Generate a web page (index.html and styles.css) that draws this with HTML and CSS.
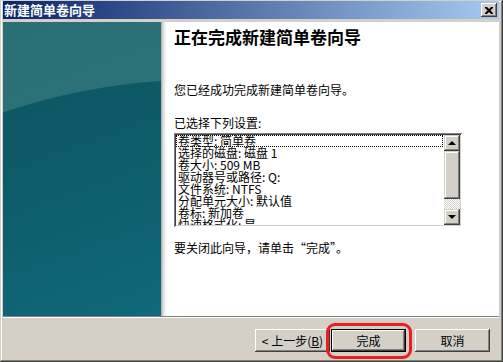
FILE: index.html
```html
<!DOCTYPE html>
<html lang="zh-CN">
<head>
    <meta charset="UTF-8">
    <title>新建简单卷向导</title>
    <link rel="stylesheet" href="styles.css">
</head>
<body>

    <div class="window">
        <div class="titlebar">
            <span class="title">新建简单卷向导</span>
            <button class="close-btn" aria-label="关闭">
                <svg width="8" height="7" viewBox="0 0 8 7">
                    <path d="M0 0h2l2 2 2-2h2v1l-2.5 2.5L8 6v1H6L4 5 2 7H0V6l2.5-2.5L0 1z" fill="#000"/>
                </svg>
            </button>
        </div>

        <div class="wizard">
            <div class="side"></div>
            <div class="main">
                <h1>正在完成新建简单卷向导</h1>
                <p class="intro">您已经成功完成新建简单卷向导。</p>
                <p class="label">已选择下列设置:</p>

                <div class="listbox">
                    <div class="items">
                        <div class="item focused">卷类型: 简单卷</div>
                        <div class="item">选择的磁盘: 磁盘 1</div>
                        <div class="item">卷大小: 509 MB</div>
                        <div class="item">驱动器号或路径: Q:</div>
                        <div class="item">文件系统: NTFS</div>
                        <div class="item">分配单元大小: 默认值</div>
                        <div class="item">卷标: 新加卷</div>
                        <div class="item">快速格式化: 是</div>
                    </div>
                    <div class="scrollbar">
                        <div class="sb-btn"><span class="arrow up"></span></div>
                        <div class="sb-thumb"></div>
                        <div class="sb-track"></div>
                        <div class="sb-btn"><span class="arrow down"></span></div>
                    </div>
                </div>

                <p class="note">要关闭此向导，请单击“完成”。</p>
            </div>
        </div>

        <div class="footer">
            <button class="btn">&lt; 上一步(<u>B</u>)</button>
            <button class="btn finish">完成<span class="mark"></span></button>
            <button class="btn cancel">取消</button>
        </div>
    </div>

</body>
</html>
```

FILE: styles.css
```css
body {
    margin: 0;
    font-family: "Noto Sans CJK SC", "Liberation Sans", sans-serif;
    font-size: 12px;
    color: #000;
}
.window {
    width: 503px;
    height: 362px;
    box-sizing: border-box;
    padding: 1px 4px 2px 3px;
    background: #d4d0c8;
    box-shadow: inset -1px -1px #404040, inset 1px 1px #d4d0c8,
                inset -2px -2px #808080, inset 2px 2px #fff;
    display: flex;
    flex-direction: column;
}
.titlebar {
    height: 18px;
    margin-bottom: 3px;
    background: linear-gradient(90deg, #0a246a, #a6caf0);
    display: flex;
    align-items: center;
    justify-content: space-between;
    padding: 0 2px 0 1px;
}
.title {
    color: #fff;
    font-weight: bold;
    font-size: 13px;
    line-height: 14px;
}
.close-btn {
    width: 16px;
    height: 14px;
    padding: 0;
    border: none;
    background: #d4d0c8;
    box-shadow: inset -1px -1px #404040, inset 1px 1px #fff,
                inset -2px -2px #808080, inset 2px 2px #d4d0c8;
    display: flex;
    align-items: center;
    justify-content: center;
}
.wizard {
    height: 294px;
    display: flex;
    background: #fff;
}
.side {
    width: 158px;
    flex: none;
    background:
        radial-gradient(circle 623px at 200px 680px, transparent 622px, rgba(110, 165, 160, 0.32) 623px),
        linear-gradient(180deg, rgba(0, 0, 0, 0) 40%, rgba(10, 40, 50, 0.0) 100%),
        linear-gradient(160deg, #0a5560 0%, #0d5a66 40%, #10687a 100%);
}
.main {
    flex: 1;
    padding-left: 13px;
    background: linear-gradient(90deg, #a8a8a8, #d8d8d8 2px, #f0f0f0 4px, #fff 6px) no-repeat;
    background-size: 6px 100%;
}
h1 {
    margin: 5px 0 0;
    font-size: 17px;
    line-height: 20px;
    font-weight: bold;
}
.intro {
    margin: 36px 0 0;
    line-height: 14px;
}
.label {
    margin: 19px 0 0;
    line-height: 14px;
}
.listbox {
    margin-top: 3px;
    width: 288px;
    height: 94px;
    box-sizing: border-box;
    padding: 2px;
    display: flex;
    background: #fff;
    box-shadow: inset 1px 1px #808080, inset -1px -1px #fff,
                inset 2px 2px #404040, inset -2px -2px #d4d0c8;
}
.items {
    flex: 1;
    overflow: hidden;
    padding-right: 1px;
}
.item {
    height: 12px;
    line-height: 12px;
    padding-left: 2px;
    white-space: nowrap;
}
.item.focused {
    outline: 1px dotted #000;
    outline-offset: -1px;
}
.scrollbar {
    width: 16px;
    display: flex;
    flex-direction: column;
}
.sb-btn, .sb-thumb {
    background: #d4d0c8;
    box-shadow: inset -1px -1px #404040, inset 1px 1px #d4d0c8,
                inset -2px -2px #808080, inset 2px 2px #fff;
}
.sb-btn {
    height: 16px;
    display: flex;
    align-items: center;
    justify-content: center;
}
.sb-thumb {
    height: 48px;
}
.sb-track {
    flex: 1;
    background: repeating-conic-gradient(#d4d0c8 0 25%, #fff 0 50%) 0 0 / 2px 2px;
}
.arrow {
    width: 0;
    height: 0;
    border-left: 4px solid transparent;
    border-right: 4px solid transparent;
}
.arrow.up {
    border-bottom: 4px solid #000;
}
.arrow.down {
    border-top: 4px solid #000;
}
.note {
    margin: 14px 0 0;
    line-height: 14px;
}
.footer {
    flex: 1;
    border-top: 1px solid #808080;
    box-shadow: inset 0 1px #fff;
    display: flex;
    justify-content: flex-end;
    align-items: flex-start;
    padding: 12px 9px 0 0;
}
.btn {
    position: relative;
    width: 75px;
    height: 23px;
    padding: 0;
    border: none;
    font-family: inherit;
    font-size: 12px;
    color: #000;
    background: #d4d0c8;
    box-shadow: inset -1px -1px #404040, inset 1px 1px #fff,
                inset -2px -2px #808080, inset 2px 2px #d4d0c8;
}
.btn u {
    text-decoration: underline;
}
.finish {
    margin-left: 1px;
    box-shadow: inset -1px -1px #000, inset 1px 1px #000,
                inset -2px -2px #404040, inset 2px 2px #fff,
                inset -3px -3px #808080;
}
.cancel {
    margin-left: 9px;
}
.mark {
    position: absolute;
    left: -5px;
    top: -6px;
    width: 86px;
    height: 36px;
    box-sizing: border-box;
    border: 3px solid #ec1c24;
    border-radius: 9px;
}
```
